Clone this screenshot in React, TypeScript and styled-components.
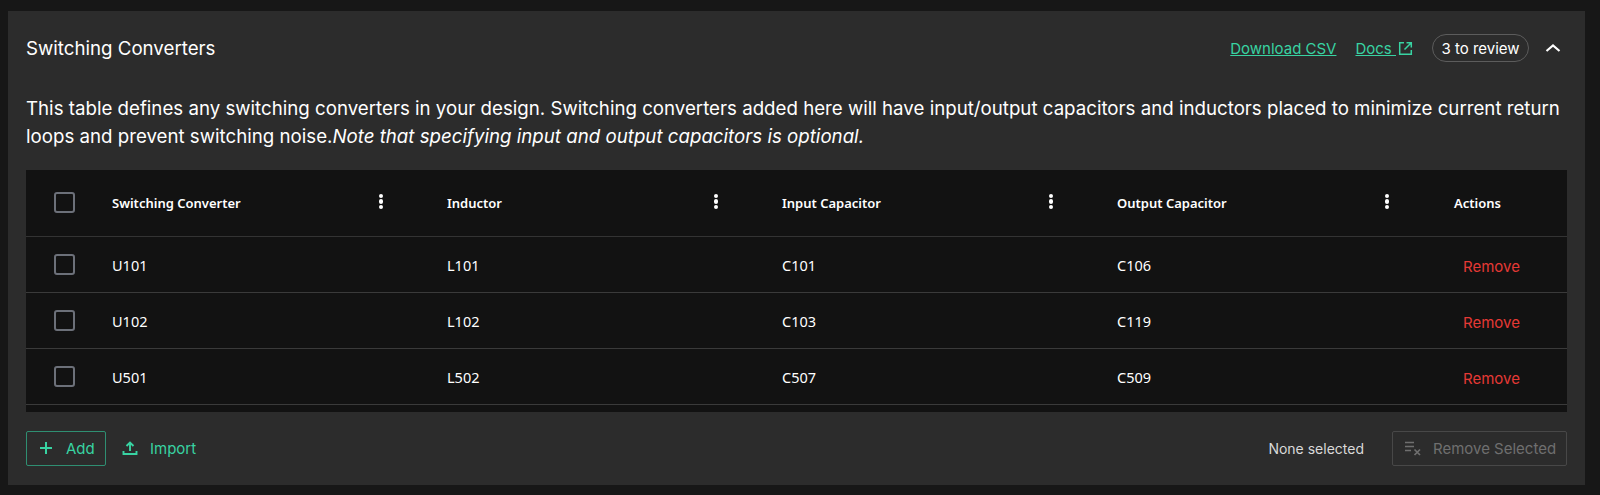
import React from 'react';
import styled, { createGlobalStyle } from 'styled-components';

const GlobalStyle = createGlobalStyle`
  html, body {
    height: 100%;
    margin: 0;
    overflow: hidden;
    background: #171717;
  }
`;

const Page = styled.div`
  width: 1600px;
  height: 495px;
  box-sizing: border-box;
  padding: 11px 15px 10px 8px;
  font-family: Inter, "Liberation Sans", sans-serif;
`;

const Panel = styled.section`
  height: 474px;
  background: #2c2c2c;
  padding: 0 18px;
  box-sizing: border-box;
`;

const Header = styled.header`
  display: flex;
  align-items: center;
  justify-content: space-between;
  height: 74px;
`;

const Title = styled.h2`
  margin: 0;
  font-size: 18.7px;
  font-weight: 400;
  color: #fff;
`;

const HeaderActions = styled.div`
  display: flex;
  align-items: center;
`;

const TextLink = styled.a`
  display: inline-flex;
  align-items: center;
  gap: 2px;
  color: #38d3a2;
  font-size: 15px;
  text-decoration: underline;
  margin-right: 19px;
`;

const ReviewPill = styled.span`
  display: inline-flex;
  align-items: center;
  justify-content: center;
  width: 97px;
  height: 28px;
  box-sizing: border-box;
  border: 1px solid #5c5c5c;
  border-radius: 14px;
  color: #fff;
  font-size: 15px;
`;

const Chevron = styled.span`
  display: inline-flex;
  margin: 0 5px 0 15px;
  color: #fff;
`;

const Description = styled.p`
  margin: 0;
  height: 75px;
  padding-top: 10px;
  font-size: 18.7px;
  line-height: 28px;
  color: #fff;
`;

const TableWrap = styled.div`
  height: 242px;
  background: #121212;
`;

const HeadRow = styled.div`
  display: grid;
  grid-template-columns: 86px 335px 335px 335px 336px 1fr;
  height: 67px;
  border-bottom: 1px solid #333;
  box-sizing: border-box;
  align-items: center;
`;

const BodyRow = styled(HeadRow)`
  height: 56px;
  border-bottom: 1px solid #3a3a3a;
`;

const CheckCell = styled.div`
  display: flex;
  padding-left: 28px;
`;

const HeadCheckCell = styled(CheckCell)`
  margin-top: -2px;
`;

const CheckBox = styled.span`
  display: block;
  width: 21px;
  height: 21px;
  box-sizing: border-box;
  border: 2px solid #6c7079;
  border-radius: 3px;
`;

const HeadCell = styled.div`
  display: flex;
  align-items: center;
  justify-content: space-between;
  padding-right: 64px;
  font-family: "Noto Sans", sans-serif;
  font-size: 13px;
  font-weight: 600;
  color: #fff;
`;

const ActionsHead = styled(HeadCell)`
  padding: 0 0 0 1px;
`;

const Kebab = styled.span`
  display: flex;
  flex-direction: column;
  gap: 1px;
  margin-top: -3px;

  i {
    display: block;
    width: 4.5px;
    height: 4.5px;
    border-radius: 50%;
    background: #fff;
  }
`;

const Cell = styled.div`
  font-family: "Noto Sans", sans-serif;
  font-size: 14.5px;
  color: #fff;
`;

const RemoveButton = styled.span`
  font-size: 15px;
  color: #e53935;
  padding-left: 10px;
  margin-top: 4px;
`;

const Footer = styled.footer`
  display: flex;
  align-items: center;
  justify-content: space-between;
  height: 72px;
`;

const FooterGroup = styled.div`
  display: flex;
  align-items: center;
`;

const AddButton = styled.button`
  display: flex;
  align-items: center;
  gap: 13px;
  width: 80px;
  height: 35px;
  box-sizing: border-box;
  padding: 0 12px;
  border: 1px solid #2f8f72;
  border-radius: 2px;
  background: transparent;
  color: #38d3a2;
  font: 400 15px Inter, sans-serif;

  svg {
    flex: none;
  }
`;

const ImportButton = styled(AddButton)`
  width: auto;
  border: none;
  gap: 12px;
  margin-left: 4px;
`;

const SelectedLabel = styled.span`
  font-size: 14px;
  color: #d9d9d9;
  margin-right: 28px;
`;

const RemoveSelected = styled.button`
  display: flex;
  align-items: center;
  gap: 11px;
  width: 175px;
  height: 35px;
  box-sizing: border-box;
  padding: 0 0 0 11px;
  border: 1px solid #484848;
  border-radius: 2px;
  background: transparent;
  color: #6f6f6f;
  font: 400 15px Inter, sans-serif;
  white-space: nowrap;

  svg {
    flex: none;
  }
`;

const rows = [
  ['U101', 'L101', 'C101', 'C106'],
  ['U102', 'L102', 'C103', 'C119'],
  ['U501', 'L502', 'C507', 'C509'],
];

const columns = ['Switching Converter', 'Inductor', 'Input Capacitor', 'Output Capacitor'];

const App = () => (
  <>
    <GlobalStyle />
    <Page>
      <Panel>
        <Header>
          <Title>Switching Converters</Title>
          <HeaderActions>
            <TextLink>Download CSV</TextLink>
            <TextLink>
              Docs&nbsp;
              <svg width="15" height="15" viewBox="0 0 15 15" fill="none" stroke="currentColor" strokeWidth="1.5">
                <path d="M6 1.7H1.7v11.6h11.6V9" />
                <path d="M8.5 1.7h4.8v4.8M13.3 1.7 6.5 8.5" />
              </svg>
            </TextLink>
            <ReviewPill>3 to review</ReviewPill>
            <Chevron>
              <svg width="18" height="10" viewBox="0 0 18 10" fill="none" stroke="currentColor" strokeWidth="2.2">
                <path d="M2.5 8 9 2.5 15.5 8" />
              </svg>
            </Chevron>
          </HeaderActions>
        </Header>
        <Description>
          This table defines any switching converters in your design. Switching converters added here will have input/output capacitors and inductors placed to minimize current return loops and prevent switching noise.
          <em>Note that specifying input and output capacitors is optional.</em>
        </Description>
        <TableWrap>
          <HeadRow>
            <HeadCheckCell><CheckBox /></HeadCheckCell>
            {columns.map((c) => (
              <HeadCell key={c}>
                {c}
                <Kebab><i /><i /><i /></Kebab>
              </HeadCell>
            ))}
            <ActionsHead>Actions</ActionsHead>
          </HeadRow>
          {rows.map((r) => (
            <BodyRow key={r[0]}>
              <CheckCell><CheckBox /></CheckCell>
              {r.map((v) => <Cell key={v}>{v}</Cell>)}
              <RemoveButton>Remove</RemoveButton>
            </BodyRow>
          ))}
        </TableWrap>
        <Footer>
          <FooterGroup>
            <AddButton>
              <svg width="14" height="14" viewBox="0 0 14 14" stroke="currentColor" strokeWidth="2"><path d="M7 1v12M1 7h12" /></svg>
              Add
            </AddButton>
            <ImportButton>
              <svg width="16" height="16" viewBox="0 0 16 16" fill="none" stroke="currentColor" strokeWidth="1.9">
                <path d="M8 11V3M4.5 6 8 2.5 11.5 6M1.5 11v3h13v-3" />
              </svg>
              Import
            </ImportButton>
          </FooterGroup>
          <FooterGroup>
            <SelectedLabel>None selected</SelectedLabel>
            <RemoveSelected>
              <svg width="18" height="16" viewBox="0 0 18 16" fill="none" stroke="currentColor" strokeWidth="1.7">
                <path d="M1 2.5h9M1 6.5h9M1 10.5h6M10.5 9.5l5.5 5.5M16 9.5 10.5 15" />
              </svg>
              Remove Selected
            </RemoveSelected>
          </FooterGroup>
        </Footer>
      </Panel>
    </Page>
  </>
);

export default App;
